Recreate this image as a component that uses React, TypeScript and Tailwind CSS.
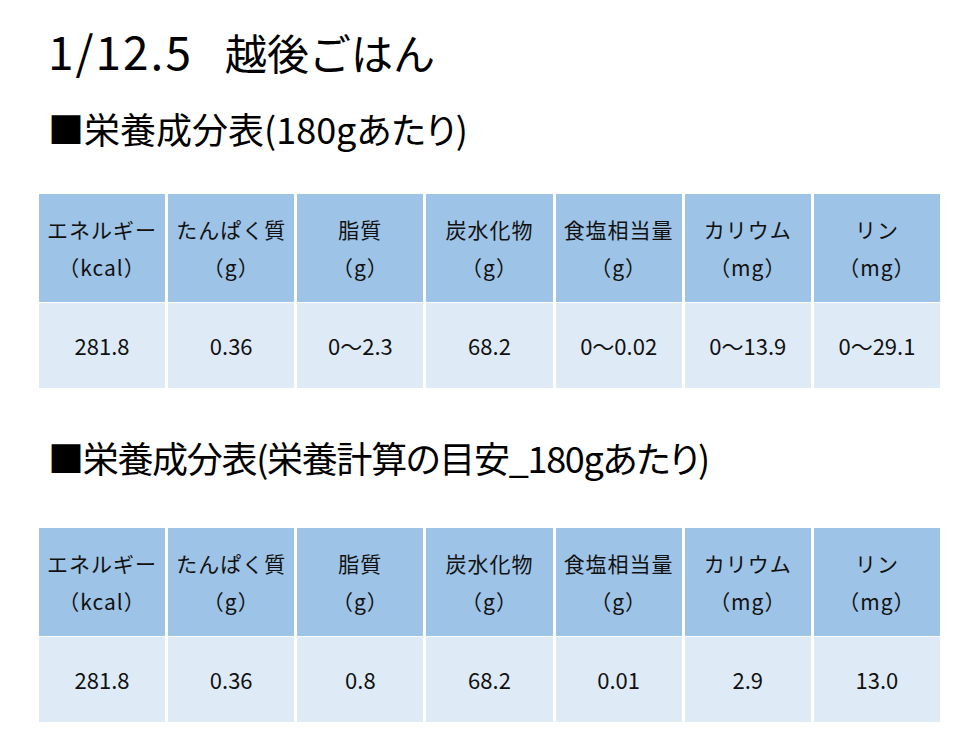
import React from 'react';

type Col = { name: string; unit: string };

const cols: Col[] = [
  { name: 'エネルギー', unit: '（kcal）' },
  { name: 'たんぱく質', unit: '（g）' },
  { name: '脂質', unit: '（g）' },
  { name: '炭水化物', unit: '（g）' },
  { name: '食塩相当量', unit: '（g）' },
  { name: 'カリウム', unit: '（mg）' },
  { name: 'リン', unit: '（mg）' },
];

const table1 = ['281.8', '0.36', '0〜2.3', '68.2', '0〜0.02', '0〜13.9', '0〜29.1'];
const table2 = ['281.8', '0.36', '0.8', '68.2', '0.01', '2.9', '13.0'];

const NutritionTable: React.FC<{ values: string[] }> = ({ values }) => (
  <div className="grid grid-cols-7 gap-x-[3px] gap-y-px w-[901px] ml-[39px]">
    {cols.map((c) => (
      <div
        key={c.name}
        className="h-[108px] bg-[#9dc3e6] flex flex-col items-center justify-center text-[21px] leading-[38px] tracking-[1px] text-[#111]"
      >
        <span>{c.name}</span>
        <span>{c.unit}</span>
      </div>
    ))}
    {values.map((v, i) => (
      <div
        key={i}
        className="h-[85px] bg-[#deebf7] flex items-center justify-center text-[22px] text-[#111]"
      >
        {v}
      </div>
    ))}
  </div>
);

export default function App() {
  return (
    <div
      className="w-[970px] h-[746px] bg-white overflow-hidden"
      style={{ fontFamily: '"Noto Sans CJK JP", "Noto Sans", sans-serif' }}
    >
      <h1 className="pl-[48px] pt-[26px] text-[42px] leading-[48px] text-black flex items-baseline">
        <span className="text-[46px] tracking-[2px] mr-[32px]">1/12.5</span>
        <span>越後ごはん</span>
      </h1>
      <h2 className="pl-[48px] mt-[30px] text-[36px] leading-[44px] text-black [font-feature-settings:'palt']">
        ■栄養成分表(180gあたり)
      </h2>
      <div className="mt-[44px]">
        <NutritionTable values={table1} />
      </div>
      {/* second heading is squeezed a little in the original slide */}
      <h2 className="pl-[48px] mt-[47px] text-[36px] leading-[44px] tracking-[-1.3px] text-black [font-feature-settings:'palt']">
        ■栄養成分表(栄養計算の目安_180gあたり)
      </h2>
      <div className="mt-[49px]">
        <NutritionTable values={table2} />
      </div>
    </div>
  );
}
